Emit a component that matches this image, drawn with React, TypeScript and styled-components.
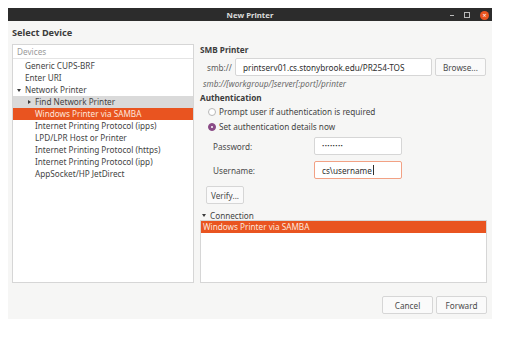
import React from 'react'
import styled, { createGlobalStyle } from 'styled-components'

const GlobalStyle = createGlobalStyle`
  html, body {
    margin: 0;
    background: #ffffff;
  }
  body {
    font-family: 'Noto Sans', 'Open Sans', sans-serif;
    color: #444444;
  }
`

const orange = '#e95420'
const line = '#d6d6d6'
const fs = '8.2px'

const Window = styled.div`
  margin: 8px 0 0 8px;
  width: 484px;
  height: 311px;
  background: #f6f6f5;
  display: flex;
  flex-direction: column;
`

const TitleBar = styled.div`
  height: 13px;
  background: #2c2c2c;
  position: relative;
  display: flex;
  align-items: center;
  justify-content: center;
`

const TitleText = styled.span`
  color: #dcdcdc;
  font-size: 7.8px;
  font-weight: 700;
`

const WinControls = styled.div`
  position: absolute;
  right: 3px;
  top: 0;
  height: 13px;
  display: flex;
  align-items: center;
  gap: 10px;
`

const Minimize = styled.span`
  width: 4px;
  height: 1px;
  background: #bbbbbb;
  margin-top: 2px;
`

const Maximize = styled.span`
  width: 4px;
  height: 4px;
  border: 1px solid #bbbbbb;
`

const CloseBtn = styled.span`
  width: 9px;
  height: 9px;
  border-radius: 50%;
  background: ${orange};
  color: #fff;
  font-size: 7px;
  line-height: 9px;
  text-align: center;
  margin-top: 2px;
`

const Body = styled.div`
  flex: 1;
  display: flex;
  flex-direction: column;
  padding: 0 5px 5px 4px;
`

const Heading = styled.div`
  font-size: 9.2px;
  font-weight: 700;
  height: 23px;
  line-height: 24px;
  color: #3c3c3c;
`

const Main = styled.div`
  display: flex;
  gap: 6px;
  height: 239px;
`

const Panel = styled.div`
  background: #ffffff;
  border: 1px solid ${line};
  box-sizing: border-box;
`

const DeviceList = styled(Panel)`
  width: 182px;
  flex: none;
`

const ListHeader = styled.div`
  height: 13px;
  line-height: 14px;
  padding-left: 4px;
  font-size: ${fs};
  color: #9a9a9a;
  border-bottom: 1px solid #e4e4e4;
  margin-bottom: 1px;
`

const Row = styled.div<{ $indent: number; $state?: 'hover' | 'selected' }>`
  height: 12px;
  line-height: 12px;
  font-size: ${fs};
  white-space: nowrap;
  display: flex;
  align-items: center;
  padding-left: ${({ $indent }) => $indent}px;
  background: ${({ $state }) =>
    $state === 'selected' ? orange : $state === 'hover' ? '#dadada' : 'transparent'};
  color: ${({ $state }) => ($state === 'selected' ? '#fde6dc' : '#444444')};
`

const Arrow = styled.span<{ $open?: boolean }>`
  width: 0;
  height: 0;
  margin-right: 4px;
  ${({ $open }) =>
    $open
      ? `border-left: 2.5px solid transparent; border-right: 2.5px solid transparent; border-top: 3px solid #3c3c3c;`
      : `border-top: 2.5px solid transparent; border-bottom: 2.5px solid transparent; border-left: 3px solid #3c3c3c;`}
`

const RightPane = styled.div`
  flex: 1;
  display: flex;
  flex-direction: column;
`

const SectionTitle = styled.div`
  font-size: ${fs};
  font-weight: 700;
  height: 12px;
  line-height: 12px;
  color: #3c3c3c;
`

const UrlRow = styled.div`
  display: flex;
  align-items: center;
  gap: 3px;
  margin-top: 2px;
`

const Prefix = styled.span`
  font-size: ${fs};
  color: #5a5a5a;
  width: 32px;
  padding-left: 7px;
  box-sizing: border-box;
`

const Entry = styled.div<{ $width: number; $focused?: boolean }>`
  width: ${({ $width }) => $width}px;
  height: 18px;
  box-sizing: border-box;
  background: #ffffff;
  border: 1px solid ${({ $focused }) => ($focused ? '#f2a184' : line)};
  border-radius: 2px;
  font-size: ${fs};
  white-space: nowrap;
  padding-left: 7px;
  color: #2e2e2e;
  display: flex;
  align-items: center;
`

const Dots = styled.span`
  font-size: 6px;
  letter-spacing: 0.4px;
  color: #2e2e2e;
`

const Caret = styled.span`
  width: 1px;
  height: 10px;
  background: #2e2e2e;
  margin-left: 1px;
`

const Button = styled.div<{ $width: number }>`
  width: ${({ $width }) => $width}px;
  height: 18px;
  box-sizing: border-box;
  border: 1px solid ${line};
  border-radius: 2px;
  background: #fafafa;
  font-size: ${fs};
  color: #4a4a4a;
  display: flex;
  align-items: center;
  justify-content: center;
`

const Hint = styled.div`
  font-size: ${fs};
  font-style: italic;
  color: #6a6a6a;
  padding-left: 3px;
  height: 16px;
  line-height: 16px;
`

const RadioRow = styled.label`
  display: flex;
  align-items: center;
  gap: 3px;
  font-size: ${fs};
  padding-left: 8px;
  height: 15px;
`

const Radio = styled.span<{ $checked?: boolean }>`
  width: 8px;
  height: 8px;
  box-sizing: border-box;
  border-radius: 50%;
  border: 1px solid ${({ $checked }) => ($checked ? '#8a4a86' : '#b8b8b8')};
  background: ${({ $checked }) => ($checked ? '#8a4a86' : '#ffffff')};
  display: flex;
  align-items: center;
  justify-content: center;
  &::after {
    content: '';
    width: 2px;
    height: 2px;
    border-radius: 50%;
    background: ${({ $checked }) => ($checked ? '#ffffff' : 'transparent')};
  }
`

const FormGrid = styled.div`
  display: grid;
  grid-template-columns: 101px 88px;
  row-gap: 6px;
  align-items: center;
  padding-left: 13px;
  margin-top: 3px;
`

const FieldLabel = styled.span`
  font-size: ${fs};
  color: #4a4a4a;
`

const VerifyWrap = styled.div`
  padding-left: 6px;
  margin-top: 7px;
`

const Expander = styled.div`
  display: flex;
  align-items: center;
  font-size: ${fs};
  height: 10px;
  margin-top: 6px;
  padding-left: 2px;
`

const ConnectionList = styled(Panel)`
  flex: 1;
`

const Footer = styled.div`
  display: flex;
  justify-content: flex-end;
  gap: 3px;
  margin-top: 13px;
`

const devices: { label: string; indent: number; arrow?: 'open' | 'closed'; state?: 'hover' | 'selected' }[] = [
  { label: 'Generic CUPS-BRF', indent: 12 },
  { label: 'Enter URI', indent: 12 },
  { label: 'Network Printer', indent: 4, arrow: 'open' },
  { label: 'Find Network Printer', indent: 15, arrow: 'closed', state: 'hover' },
  { label: 'Windows Printer via SAMBA', indent: 22, state: 'selected' },
  { label: 'Internet Printing Protocol (ipps)', indent: 22 },
  { label: 'LPD/LPR Host or Printer', indent: 22 },
  { label: 'Internet Printing Protocol (https)', indent: 22 },
  { label: 'Internet Printing Protocol (ipp)', indent: 22 },
  { label: 'AppSocket/HP JetDirect', indent: 22 },
]

const App: React.FC = () => {
  return (
    <>
      <GlobalStyle />
      <Window>
        <TitleBar>
          <TitleText>New Printer</TitleText>
          <WinControls>
            <Minimize />
            <Maximize />
            <CloseBtn>×</CloseBtn>
          </WinControls>
        </TitleBar>
        <Body>
          <Heading>Select Device</Heading>
          <Main>
            <DeviceList>
              <ListHeader>Devices</ListHeader>
              {devices.map((d) => (
                <Row key={d.label} $indent={d.indent} $state={d.state}>
                  {d.arrow && <Arrow $open={d.arrow === 'open'} />}
                  {d.label}
                </Row>
              ))}
            </DeviceList>
            <RightPane>
              <SectionTitle>SMB Printer</SectionTitle>
              <UrlRow>
                <Prefix>smb://</Prefix>
                <Entry $width={197}>printserv01.cs.stonybrook.edu/PR254-TOS</Entry>
                <Button $width={51}>Browse...</Button>
              </UrlRow>
              <Hint>smb://[workgroup/]server[:port]/printer</Hint>
              <SectionTitle>Authentication</SectionTitle>
              <RadioRow>
                <Radio />
                Prompt user if authentication is required
              </RadioRow>
              <RadioRow>
                <Radio $checked />
                Set authentication details now
              </RadioRow>
              <FormGrid>
                <FieldLabel>Password:</FieldLabel>
                <Entry $width={88}>
                  <Dots>••••••••</Dots>
                </Entry>
                <FieldLabel>Username:</FieldLabel>
                <Entry $width={88} $focused>
                  cs\username
                  <Caret />
                </Entry>
              </FormGrid>
              <VerifyWrap>
                <Button $width={38}>Verify...</Button>
              </VerifyWrap>
              <Expander>
                <Arrow $open />
                Connection
              </Expander>
              <ConnectionList>
                <Row $indent={2} $state="selected">
                  Windows Printer via SAMBA
                </Row>
              </ConnectionList>
            </RightPane>
          </Main>
          <Footer>
            <Button $width={51}>Cancel</Button>
            <Button $width={51}>Forward</Button>
          </Footer>
        </Body>
      </Window>
    </>
  )
}

export default App
